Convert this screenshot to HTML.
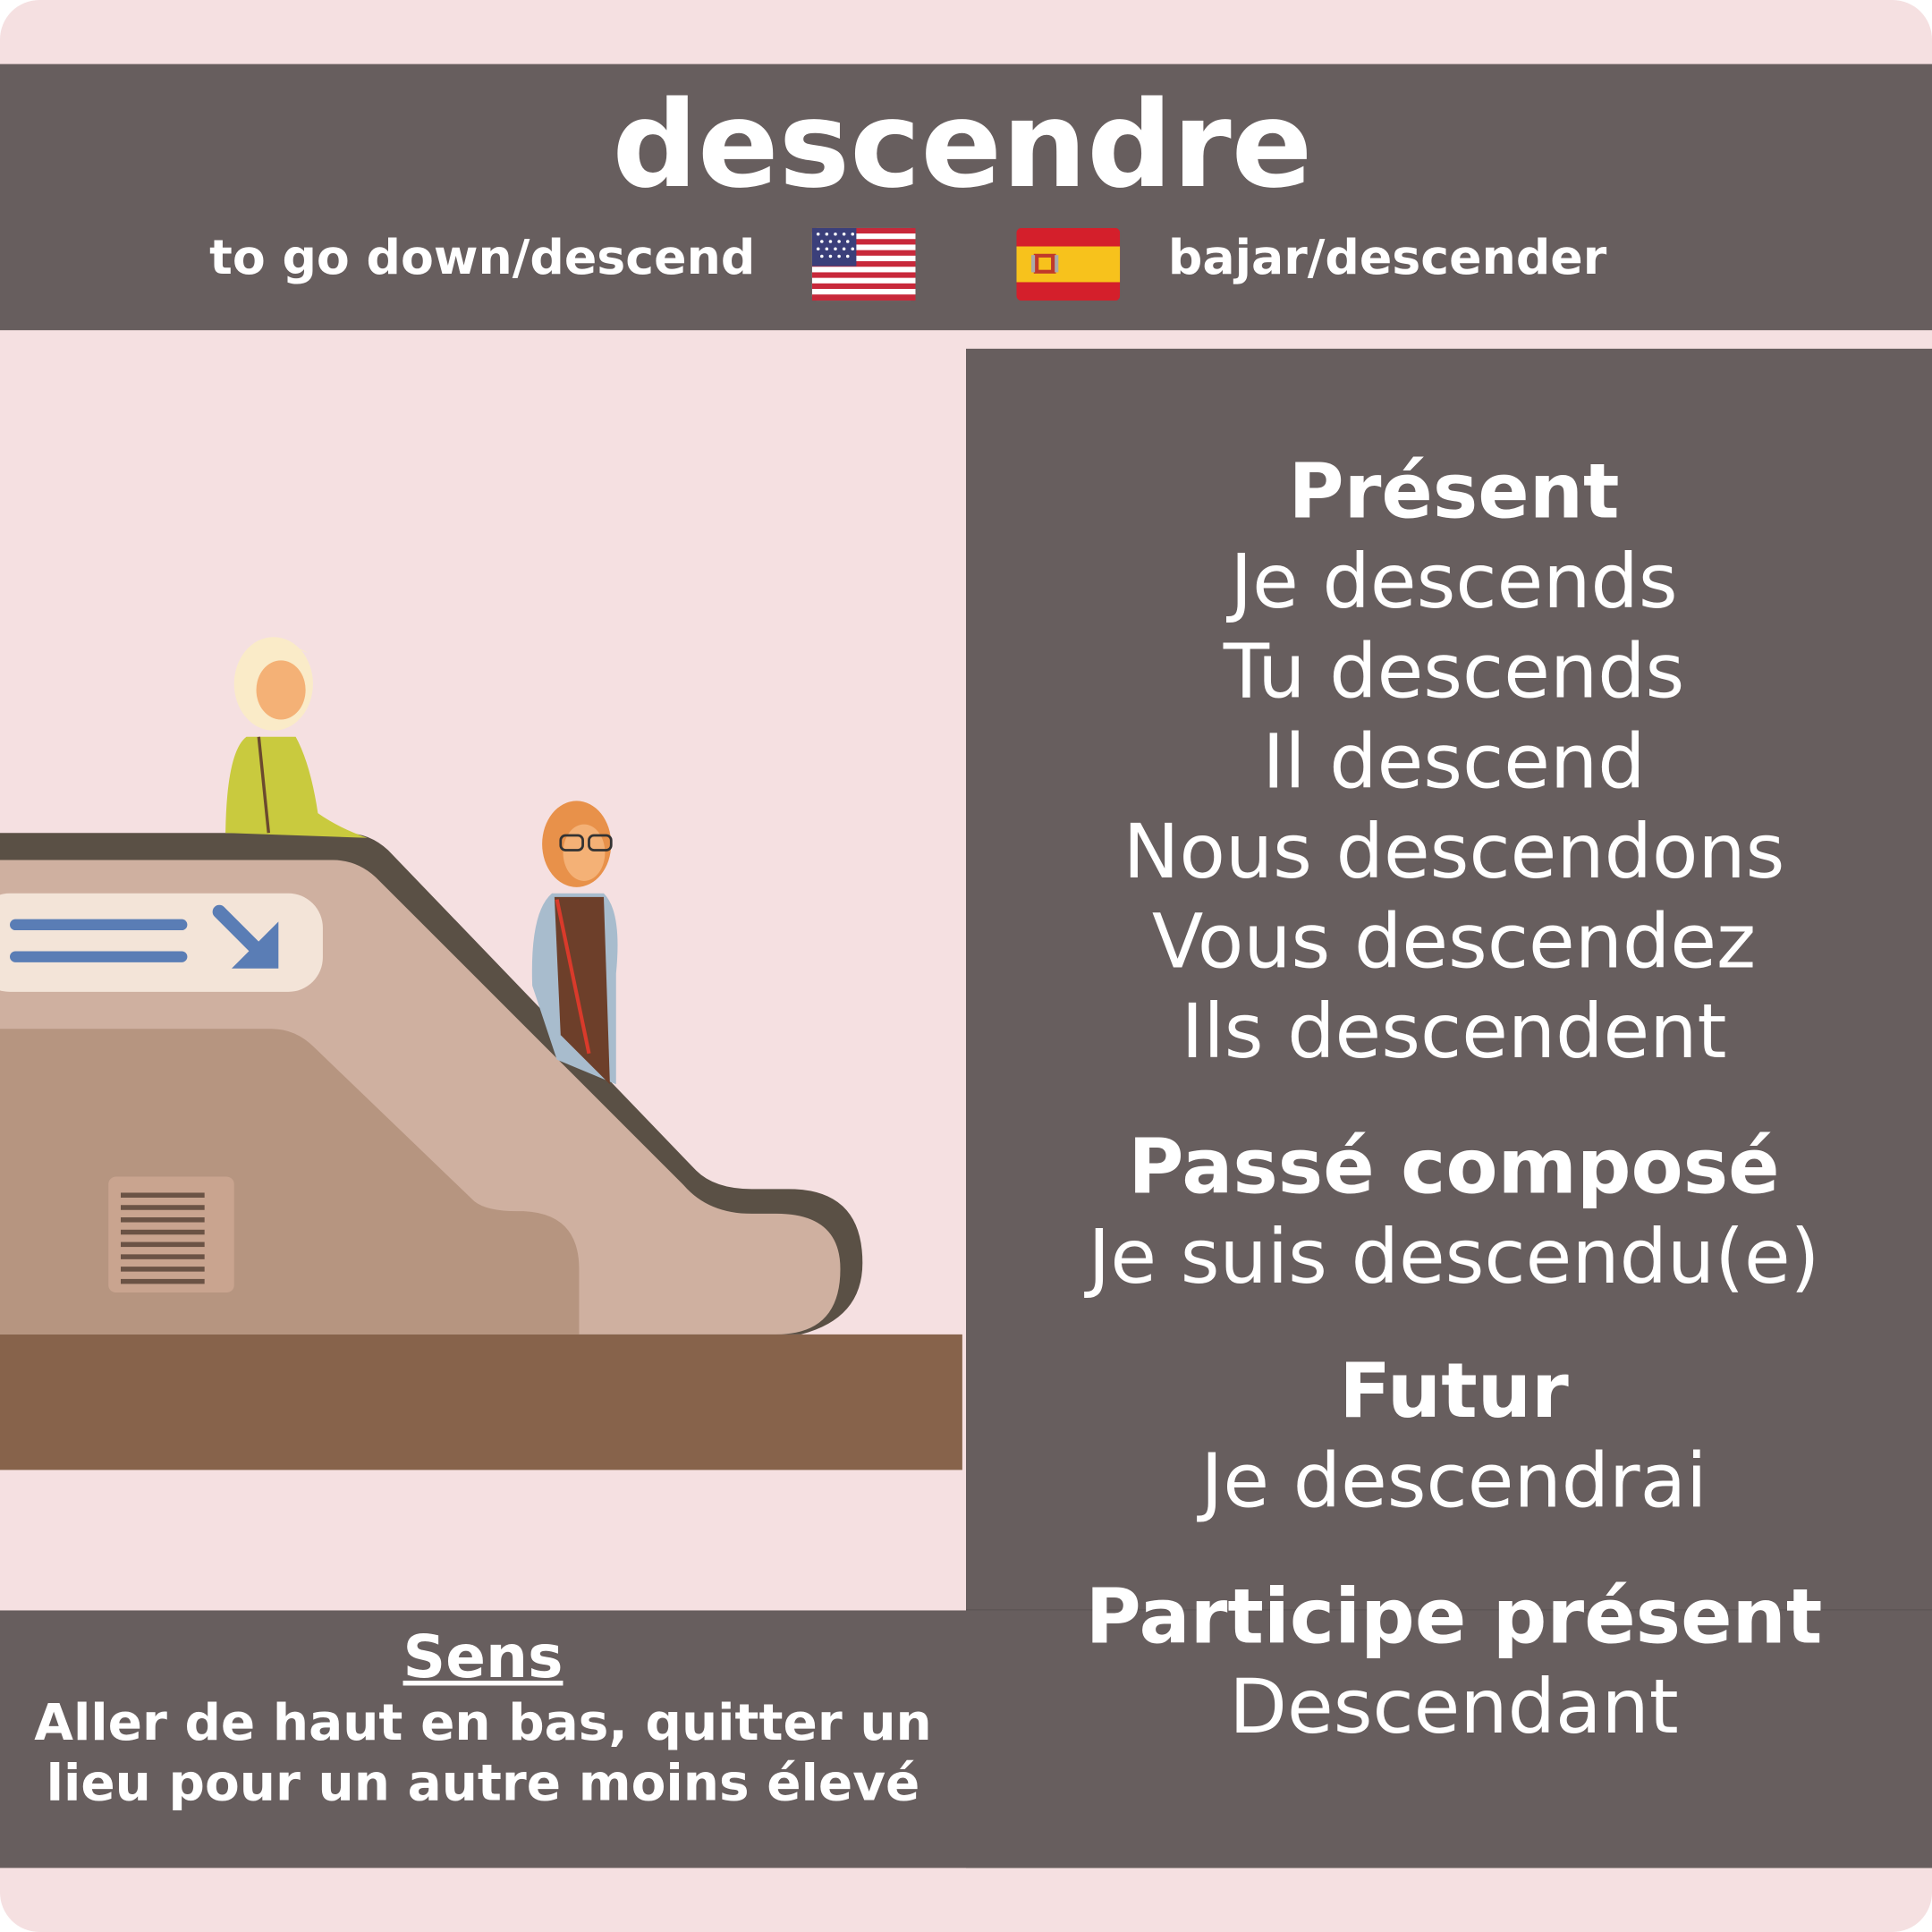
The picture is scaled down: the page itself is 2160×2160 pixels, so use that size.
<!DOCTYPE html>
<html><head><meta charset="utf-8"><style>
html,body{margin:0;padding:0;width:2160px;height:2160px;overflow:hidden;background:#fff}
#s{position:absolute;left:0;top:0;width:1568px;height:1568px;transform:scale(1.377551);transform-origin:0 0;background:#f5e0e1;border-radius:32px;overflow:hidden;font-family:"DejaVu Sans","Liberation Sans",sans-serif}
.p{position:absolute;background:#675e5e}
.t{position:absolute;color:#fff;white-space:nowrap}
.c{position:absolute;left:788px;width:784px;text-align:center;color:#fff;font-size:61px;line-height:73px}
.b{font-weight:bold}
.h{font-size:61.5px}
</style></head><body><div id="s">
<div class="p" style="left:0;top:52px;width:1568px;height:216px"></div>
<div class="p" style="left:784px;top:283px;width:784px;height:1233px"></div>
<div class="p" style="left:0;top:1307px;width:1568px;height:209px"></div>
<div style="position:absolute;left:784px;top:1306px;width:784px;height:1px;background:#5e5656"></div>
<div class="t b" style="left:-3px;width:1568px;text-align:center;top:62px;font-size:97px;line-height:112px">descendre</div>
<div class="t b" style="left:170px;top:186px;font-size:39px;line-height:48px">to go down/descend</div>
<div class="t b" style="left:948px;top:186px;font-size:39px;line-height:48px">bajar/descender</div>
<svg style="position:absolute;left:659px;top:185px" width="84" height="59" viewBox="0 0 84 59">
<rect width="84" height="59" rx="4" fill="#fff"/>
<g fill="#c8283a"><rect y="0" width="84" height="4.5"/><rect y="9" width="84" height="4.5"/><rect y="18" width="84" height="4.5"/><rect y="27" width="84" height="4.5"/><rect y="36" width="84" height="4.5"/><rect y="45" width="84" height="4.5"/><rect y="54" width="84" height="5"/></g>
<rect width="36" height="31" fill="#3b3f7a"/>
<g fill="#fff"><circle cx="5" cy="5" r="1.3"/><circle cx="12" cy="5" r="1.3"/><circle cx="19" cy="5" r="1.3"/><circle cx="26" cy="5" r="1.3"/><circle cx="33" cy="5" r="1.3"/><circle cx="8" cy="11" r="1.3"/><circle cx="15" cy="11" r="1.3"/><circle cx="22" cy="11" r="1.3"/><circle cx="29" cy="11" r="1.3"/><circle cx="5" cy="17" r="1.3"/><circle cx="12" cy="17" r="1.3"/><circle cx="19" cy="17" r="1.3"/><circle cx="26" cy="17" r="1.3"/><circle cx="33" cy="17" r="1.3"/><circle cx="8" cy="23" r="1.3"/><circle cx="15" cy="23" r="1.3"/><circle cx="22" cy="23" r="1.3"/><circle cx="29" cy="23" r="1.3"/></g></svg>
<svg style="position:absolute;left:825px;top:185px" width="84" height="59" viewBox="0 0 84 59">
<rect width="84" height="59" rx="4" fill="#d41f2b"/><rect y="15" width="84" height="29" fill="#f7c21c"/>
<rect x="14" y="21" width="18" height="16" fill="#c0392b"/><rect x="18" y="24" width="10" height="10" fill="#f7c21c"/><rect x="12" y="22" width="3" height="14" fill="#aaa"/><rect x="31" y="22" width="3" height="14" fill="#aaa"/></svg>
<svg style="position:absolute;left:0;top:500px" width="784" height="700" viewBox="0 500 784 700">
<rect x="0" y="1083" width="781" height="110" fill="#87634b"/>
<path d="M0 676 L280 676 Q300 676 315 690 L565 950 Q580 965 610 965 L640 965 Q700 965 700 1025 Q700 1070 650 1083 L0 1083 Z" fill="#5a5045"/>
<path d="M0 698 L270 698 Q290 698 305 712 L555 962 Q575 985 610 985 L630 985 Q682 985 682 1030 Q682 1083 630 1083 L0 1083 Z" fill="#cfb0a0"/>
<path d="M0 835 L220 835 Q240 835 255 850 L385 975 Q395 983 420 983 L425 983 Q470 985 470 1030 L470 1083 L0 1083 Z" fill="#b69580"/>
<rect x="-20" y="725" width="282" height="80" rx="28" fill="#f3e4d8"/>
<rect x="8" y="746" width="144" height="9" rx="4.5" fill="#5a7db5"/><rect x="8" y="772" width="144" height="9" rx="4.5" fill="#5a7db5"/>
<path d="M178 740 L210 772" stroke="#5a7db5" stroke-width="11" stroke-linecap="round"/><path d="M226 748 L226 786 L188 786 Z" fill="#5a7db5"/>
<rect x="88" y="955" width="102" height="94" rx="6" fill="#c9a48f"/>
<g fill="#6b5345"><rect x="98" y="968" width="68" height="4"/><rect x="98" y="978" width="68" height="4"/><rect x="98" y="988" width="68" height="4"/><rect x="98" y="998" width="68" height="4"/><rect x="98" y="1008" width="68" height="4"/><rect x="98" y="1018" width="68" height="4"/><rect x="98" y="1028" width="68" height="4"/><rect x="98" y="1038" width="68" height="4"/></g>
<path d="M183 676 Q184 610 200 598 L240 598 Q252 620 258 660 Q275 672 298 680 L183 676Z" fill="#c9ca3e"/>
<ellipse cx="222" cy="555" rx="32" ry="38" fill="#faebc8"/>
<ellipse cx="228" cy="560" rx="20" ry="24" fill="#f4b176"/>
<path d="M198 540 Q215 515 250 530 Q235 520 205 525Z" fill="#faebc8"/>
<path d="M210 598 L218 676" stroke="#6b4a2e" stroke-width="2.5" fill="none"/>
<path d="M432 800 Q430 740 448 725 L490 725 Q505 740 500 790 L500 880 L452 860 Z" fill="#a8bccd"/>
<path d="M450 728 L490 728 L495 880 L455 840 Z" fill="#6d3f2a"/>
<ellipse cx="468" cy="685" rx="28" ry="35" fill="#e8914a"/>
<ellipse cx="474" cy="692" rx="17" ry="23" fill="#f4b176"/>
<rect x="455" y="678" width="18" height="12" rx="4" fill="none" stroke="#333" stroke-width="2"/><rect x="478" y="678" width="18" height="12" rx="4" fill="none" stroke="#333" stroke-width="2"/>
<path d="M452 730 L478 855" stroke="#d93a2b" stroke-width="3" fill="none"/>
</svg>
<div class="c b h" style="top:363px">Présent</div>
<div class="c" style="top:436px">Je descends<br>Tu descends<br>Il descend<br>Nous descendons<br>Vous descendez<br>Ils descendent</div>
<div class="c b h" style="top:911px">Passé composé</div>
<div class="c" style="top:984px">Je suis descendu(e)</div>
<div class="c b h" style="top:1093px">Futur</div>
<div class="c" style="top:1166px">Je descendrai</div>
<div class="c b h" style="top:1276px">Participe présent</div>
<div class="c" style="top:1349px">Descendant</div>
<div class="t b" style="left:0;width:784px;text-align:center;top:1316px;font-size:48px;line-height:58px;text-decoration:underline">Sens</div>
<div class="t b" style="left:0;width:784px;text-align:center;top:1374px;font-size:41px;line-height:49px">Aller de haut en bas, quitter un<br>lieu pour un autre moins élevé</div>
</div></body></html>
